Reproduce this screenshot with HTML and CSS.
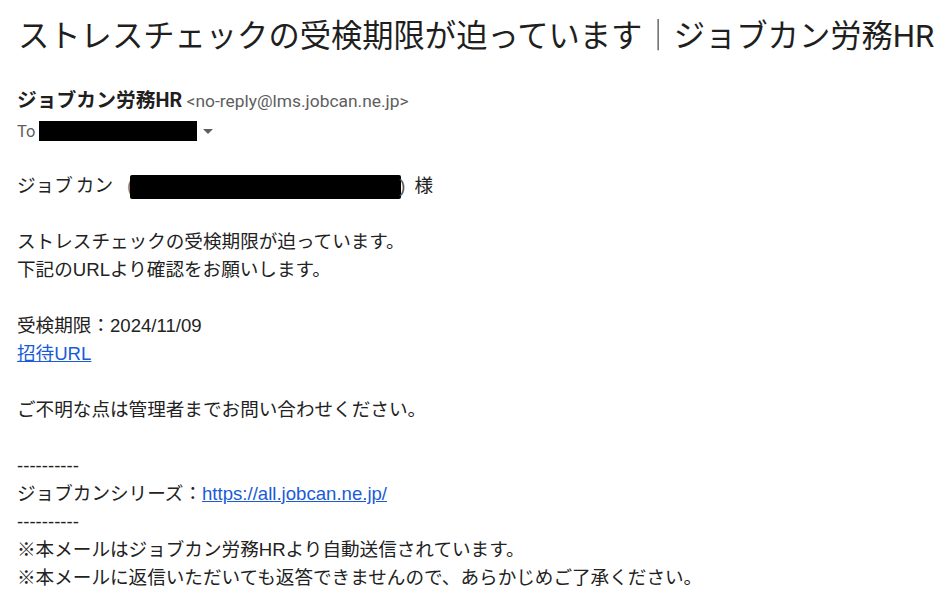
FILE: index.html
```html
<!DOCTYPE html>
<html lang="ja">
<head>
<meta charset="utf-8">
<title>ストレスチェックの受検期限が迫っています</title>
<link rel="stylesheet" href="styles.css">
</head>
<body>
<div class="mail">
  <h1 class="subject">ストレスチェックの受検期限が迫っています<span class="bar">｜</span>ジョブカン労務HR</h1>
  <div class="header">
    <div class="from"><span class="sender">ジョブカン労務HR</span> <span class="addr">&lt;no-reply@lms.jobcan.ne.jp&gt;</span></div>
    <div class="to"><span class="to-label">To</span><span class="redact redact-to"></span><span class="caret"></span></div>
  </div>
  <div class="body">
    <div class="line">ジョブ<span class="gap"></span>カン<span class="paren-open">(</span><span class="redact redact-name"></span><span class="paren-close">)</span><span class="sama">様</span></div>
    <div class="line blank"></div>
    <div class="line">ストレスチェックの受検期限が迫っています。</div>
    <div class="line">下記のURLより確認をお願いします。</div>
    <div class="line blank"></div>
    <div class="line">受検期限：2024/11/09</div>
    <div class="line"><a class="link" href="#">招待URL</a></div>
    <div class="line blank"></div>
    <div class="line">ご不明な点は管理者までお問い合わせください。</div>
    <div class="line blank"></div>
    <div class="line">----------</div>
    <div class="line">ジョブカンシリーズ：<a class="link" href="#">https://all.jobcan.ne.jp/</a></div>
    <div class="line">----------</div>
    <div class="line">※本メールはジョブカン労務HRより自動送信されています。</div>
    <div class="line">※本メールに返信いただいても返答できませんので、あらかじめご了承ください。</div>
  </div>
</div>
</body>
</html>
```
FILE: styles.css
```css
html, body {
  margin: 0;
  padding: 0;
  background: #ffffff;
}
body {
  font-family: "Liberation Sans", Arial, "Noto Sans CJK JP", sans-serif;
  color: #222222;
}
.mail {
  padding: 17px 0 0 17px;
}
.subject {
  margin: 0;
  padding-left: 1px;
  font-family: Roboto, "Noto Sans CJK JP", sans-serif;
  font-size: 31.3px;
  font-weight: 400;
  line-height: 40px;
  color: #1f1f1f;
  white-space: nowrap;
}
.bar {
  display: inline-block;
  color: #555555;
  transform: translateZ(0);
}
.header {
  margin-top: 29px;
}
.from {
  line-height: 30px;
  height: 30px;
  white-space: nowrap;
}
.sender {
  font-family: Roboto, "Noto Sans CJK JP", sans-serif;
  font-weight: 700;
  font-size: 19.8px;
  color: #1f1f1f;
}
.addr {
  font-family: Roboto, sans-serif;
  font-size: 17.4px;
  color: #5e5e5e;
}
.to {
  display: flex;
  align-items: center;
  height: 30px;
  font-family: Roboto, sans-serif;
  font-size: 16.5px;
  color: #5e5e5e;
}
.to-label {
  margin-right: 4px;
}
.redact {
  display: inline-block;
  background: #000;
}
.redact-to {
  width: 158px;
  height: 20px;
}
.caret {
  width: 0;
  height: 0;
  margin-left: 6px;
  border-left: 5px solid transparent;
  border-right: 5px solid transparent;
  border-top: 5px solid #5e5e5e;
}
.body {
  margin-top: 26px;
  font-size: 18.6px;
}
.line {
  height: 28px;
  line-height: 28px;
  white-space: nowrap;
}
.gap {
  display: inline-block;
  width: 3px;
}
.paren-open {
  margin-left: 14px;
  color: #777777;
}
.redact-name {
  width: 271px;
  height: 24px;
  vertical-align: middle;
  margin: 0 -2px 0 -3px;
  border-radius: 2px;
}
.paren-close {
  color: #555555;
}
.sama {
  margin-left: 9px;
}
.link {
  color: #1a5bd6;
  text-decoration: underline;
}
```
